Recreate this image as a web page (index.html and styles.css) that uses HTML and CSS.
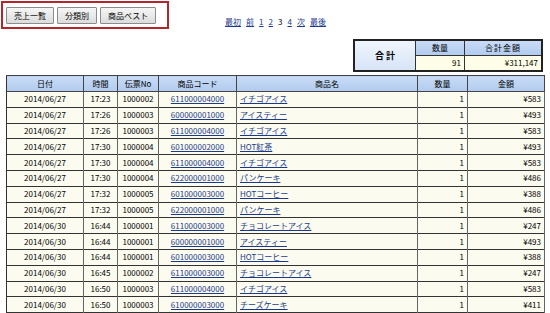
FILE: index.html
```html
<!DOCTYPE html>
<html lang="ja">
<head>
<meta charset="utf-8">
<title>売上一覧</title>
<link rel="stylesheet" href="styles.css">
</head>
<body>
<div class="top">
  <div class="navbox">
    <button class="btn">売上一覧</button>
    <button class="btn">分類別</button>
    <button class="btn">商品ベスト</button>
  </div>
  <div class="pager">
    <a href="#">最初</a>
    <a href="#">前</a>
    <a href="#">1</a>
    <a href="#">2</a>
    <span>3</span>
    <a href="#">4</a>
    <a href="#">次</a>
    <a href="#">最後</a>
  </div>
</div>

<table class="summary">
  <tr>
    <th class="total" rowspan="2">合 計</th>
    <th class="sh c-qty">数量</th>
    <th class="sh c-amt">合計金額</th>
  </tr>
  <tr>
    <td class="num">91</td>
    <td class="num">¥311,147</td>
  </tr>
</table>

<table class="list">
  <colgroup>
    <col class="w-date"><col class="w-time"><col class="w-slip"><col class="w-code"><col class="w-name"><col class="w-qty"><col class="w-amt">
  </colgroup>
  <thead>
    <tr><th>日付</th><th>時間</th><th>伝票No</th><th>商品コード</th><th>商品名</th><th>数量</th><th>金額</th></tr>
  </thead>
  <tbody>
    <tr><td class="ctr">2014/06/27</td><td class="ctr">17:23</td><td class="ctr">1000002</td><td class="ctr"><a href="#">611000004000</a></td><td><a href="#">イチゴアイス</a></td><td class="num">1</td><td class="num">¥583</td></tr>
    <tr><td class="ctr">2014/06/27</td><td class="ctr">17:26</td><td class="ctr">1000003</td><td class="ctr"><a href="#">600000001000</a></td><td><a href="#">アイスティー</a></td><td class="num">1</td><td class="num">¥493</td></tr>
    <tr><td class="ctr">2014/06/27</td><td class="ctr">17:26</td><td class="ctr">1000003</td><td class="ctr"><a href="#">611000004000</a></td><td><a href="#">イチゴアイス</a></td><td class="num">1</td><td class="num">¥583</td></tr>
    <tr><td class="ctr">2014/06/27</td><td class="ctr">17:30</td><td class="ctr">1000004</td><td class="ctr"><a href="#">601000002000</a></td><td><a href="#">HOT紅茶</a></td><td class="num">1</td><td class="num">¥493</td></tr>
    <tr><td class="ctr">2014/06/27</td><td class="ctr">17:30</td><td class="ctr">1000004</td><td class="ctr"><a href="#">611000004000</a></td><td><a href="#">イチゴアイス</a></td><td class="num">1</td><td class="num">¥583</td></tr>
    <tr><td class="ctr">2014/06/27</td><td class="ctr">17:30</td><td class="ctr">1000004</td><td class="ctr"><a href="#">622000001000</a></td><td><a href="#">パンケーキ</a></td><td class="num">1</td><td class="num">¥486</td></tr>
    <tr><td class="ctr">2014/06/27</td><td class="ctr">17:32</td><td class="ctr">1000005</td><td class="ctr"><a href="#">601000003000</a></td><td><a href="#">HOTコーヒー</a></td><td class="num">1</td><td class="num">¥388</td></tr>
    <tr><td class="ctr">2014/06/27</td><td class="ctr">17:32</td><td class="ctr">1000005</td><td class="ctr"><a href="#">622000001000</a></td><td><a href="#">パンケーキ</a></td><td class="num">1</td><td class="num">¥486</td></tr>
    <tr><td class="ctr">2014/06/30</td><td class="ctr">16:44</td><td class="ctr">1000001</td><td class="ctr"><a href="#">611000003000</a></td><td><a href="#">チョコレートアイス</a></td><td class="num">1</td><td class="num">¥247</td></tr>
    <tr><td class="ctr">2014/06/30</td><td class="ctr">16:44</td><td class="ctr">1000001</td><td class="ctr"><a href="#">600000001000</a></td><td><a href="#">アイスティー</a></td><td class="num">1</td><td class="num">¥493</td></tr>
    <tr><td class="ctr">2014/06/30</td><td class="ctr">16:44</td><td class="ctr">1000001</td><td class="ctr"><a href="#">601000003000</a></td><td><a href="#">HOTコーヒー</a></td><td class="num">1</td><td class="num">¥388</td></tr>
    <tr><td class="ctr">2014/06/30</td><td class="ctr">16:45</td><td class="ctr">1000002</td><td class="ctr"><a href="#">611000003000</a></td><td><a href="#">チョコレートアイス</a></td><td class="num">1</td><td class="num">¥247</td></tr>
    <tr><td class="ctr">2014/06/30</td><td class="ctr">16:50</td><td class="ctr">1000003</td><td class="ctr"><a href="#">611000004000</a></td><td><a href="#">イチゴアイス</a></td><td class="num">1</td><td class="num">¥583</td></tr>
    <tr><td class="ctr">2014/06/30</td><td class="ctr">16:50</td><td class="ctr">1000003</td><td class="ctr"><a href="#">610000003000</a></td><td><a href="#">チーズケーキ</a></td><td class="num">1</td><td class="num">¥411</td></tr>
  </tbody>
</table>
</body>
</html>
```

FILE: styles.css
```css
html, body {
  margin: 0;
  padding: 0;
  background: #ffffff;
}
body {
  font-family: "Noto Sans CJK JP", "Noto Sans", sans-serif;
  font-size: 8px;
  color: #000;
  line-height: 1;
}
a {
  color: #1c3a8c;
  text-decoration: underline;
}

.top {
  display: grid;
  grid-template-columns: 1fr auto 1fr;
  padding: 1px 0 0 1px;
}
.navbox {
  grid-column: 1;
  justify-self: start;
  display: flex;
  gap: 3px;
  border: 2px solid #b3262b;
  padding: 4px 11px 3px 3px;
}
.btn {
  font-family: "Noto Sans CJK JP", sans-serif;
  font-size: 8px;
  height: 17px;
  padding: 0 7px;
  margin: 0;
  border: 1px solid #8c8c8c;
  border-radius: 1px;
  background: linear-gradient(#f6f6f6, #dcdcdc);
  color: #000;
  line-height: 15px;
}
.btn-wide {
  padding: 0 9px;
}
.pager {
  grid-column: 2;
  align-self: end;
  margin-bottom: 3px;
  display: flex;
  gap: 5px;
  line-height: 9px;
}

.summary {
  margin: 10px 7px 0 auto;
  border-collapse: collapse;
  border: 2px solid #222;
}
.summary th, .summary td {
  border: 1px solid #333;
  height: 14px;
  padding: 0 3px;
}
.summary .total {
  width: 54px;
  font-size: 9px;
  font-weight: bold;
  background: linear-gradient(#f0f5fd, #d6e4f7);
}
.summary .sh {
  font-weight: normal;
  background: linear-gradient(#c8dbf6, #b2cbee);
}
.summary .c-qty { width: 42px; }
.summary .c-amt { width: 70px; letter-spacing: 1px; }
.summary td {
  background: #fdfde8;
}

.num { text-align: right; }
.ctr { text-align: center; }

.list {
  margin: 3px 6px 0 6px;
  width: 538px;
  table-layout: fixed;
  border-collapse: collapse;
  border: 1px solid #333;
}
.w-date { width: 77px; }
.w-time { width: 34px; }
.w-slip { width: 41px; }
.w-code { width: 78px; }
.w-name { width: 181px; }
.w-qty  { width: 50px; }
.w-amt  { width: 77px; }
.list th {
  height: 15px;
  font-weight: normal;
  background: linear-gradient(#c8dbf6, #b2cbee);
  border: 1px solid #444;
  padding: 0 3px;
}
.list td {
  height: 14.8px;
  background: #fbfbef;
  border-top: 1px solid #333;
  border-left: 1px solid #666;
  border-right: 1px solid #666;
  padding: 0 3px;
  white-space: nowrap;
  overflow: hidden;
}
.list td:first-child, .list th:first-child { border-left: 1px solid #333; }
```
